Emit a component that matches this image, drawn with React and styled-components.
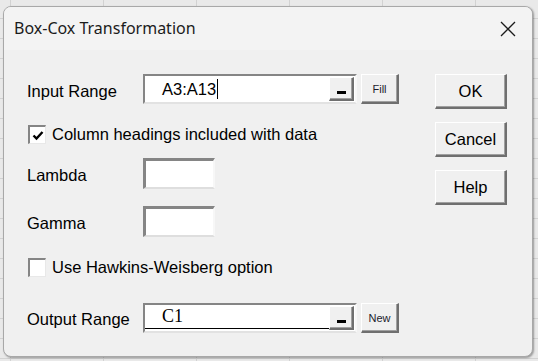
import React from "react"
import styled, { createGlobalStyle } from "styled-components"

const GlobalStyle = createGlobalStyle`
    html, body {
        margin: 0;
        padding: 0;
    }
    body {
        width: 538px;
        height: 361px;
        overflow: hidden;
        background-color: #e9e9e9;
        background-image:
            linear-gradient(to right, #d2d2d2 1px, transparent 1px),
            linear-gradient(to bottom, #d2d2d2 1px, transparent 1px);
        background-size: 93px 100%, 100% 20px;
        background-position: 10px 0, 0 -2px;
        font-family: "Liberation Sans", Arial, sans-serif;
    }
`

const Page = styled.div`
    box-sizing: border-box;
    width: 538px;
    height: 361px;
    padding: 6px 5px 4px 3px;
    display: flex;
`

const Dialog = styled.div`
    box-sizing: border-box;
    width: 530px;
    height: 351px;
    border: 1px solid #a8a8a8;
    border-radius: 8px;
    overflow: hidden;
    background: #f0f0f0;
    box-shadow: 1px 1px 2px rgba(0, 0, 0, 0.35);
    display: flex;
    flex-direction: column;
`

const TitleBar = styled.div`
    height: 43px;
    flex: none;
    background: #f3f3f3;
    display: flex;
    align-items: center;
    justify-content: space-between;
    padding: 0 16px 0 10px;

    span {
        font-family: "Noto Sans", "Open Sans", sans-serif;
        font-size: 16px;
        color: #1b1b1b;
        margin-top: -2px;
    }
`

const Body = styled.div`
    display: flex;
    padding: 24px 0 0 23px;
`

const Form = styled.div`
    display: flex;
    flex-direction: column;
    width: 372px;
`

const Row = styled.div`
    display: flex;
    align-items: center;
    height: ${p => p.h}px;
    margin-top: ${p => p.mt || 0}px;
`

const Label = styled.div`
    width: 116px;
    flex: none;
    font-size: 16.5px;
    color: #000;
    padding-top: ${p => (p.low ? 2 : 4)}px;
`

const Field = styled.div`
    box-sizing: border-box;
    width: 214px;
    height: 30px;
    border-style: solid;
    border-width: 2px;
    border-color: #858585 #f7f7f7 #e2e2e2 #858585;
    background: #fff;
    display: flex;
    align-items: center;
    padding-right: 1px;
`

const FieldText = styled.div`
    flex: 1;
    align-self: stretch;
    display: flex;
    align-items: center;
    padding-left: 17px;
    font-family: ${p => (p.serif ? '"Liberation Serif", "Times New Roman", serif' : '"Liberation Sans", Arial, sans-serif')};
    font-size: ${p => (p.serif ? 18 : 16.5)}px;
    color: #000;
    border-bottom: ${p => (p.underline ? "1px solid #000" : "none")};
    margin-bottom: ${p => (p.underline ? 2 : 0)}px;
`

const Caret = styled.span`
    display: inline-block;
    width: 1px;
    height: 20px;
    background: #000;
    margin-left: 1px;
`

const Raised = styled.button`
    box-sizing: border-box;
    padding: 0;
    background: #f0f0f0;
    border-style: solid;
    border-width: 1px 2px 2px 1px;
    border-color: #ffffff #6f6f6f #6f6f6f #ffffff;
    box-shadow: inset -1px -1px 0 #a0a0a0;
    font-family: "Liberation Sans", Arial, sans-serif;
    color: #000;
    cursor: default;
`

const PickButton = styled(Raised)`
    width: 25px;
    height: 24px;
    display: flex;
    align-items: flex-end;
    justify-content: center;
    padding-bottom: 5px;

    &::after {
        content: "";
        width: 9px;
        height: 3px;
        background: #000;
    }
`

const SmallButton = styled(Raised)`
    width: 38px;
    height: 30px;
    margin-left: 4px;
    font-size: 11px;
    color: #1c1c2c;
`

const Box = styled.div`
    box-sizing: border-box;
    width: 72px;
    height: 31px;
    border-style: solid;
    border-width: 3px 2px 2px 3px;
    border-color: #858585 #f7f7f7 #dedede #858585;
    background: #fff;
`

const CheckRow = styled.label`
    display: flex;
    align-items: center;
    margin-left: 1px;
    font-size: 16.5px;
    color: #000;
    gap: 6px;
`

const CheckBox = styled.span`
    box-sizing: border-box;
    width: 18px;
    height: 19px;
    border-style: solid;
    border-width: 2px 1px 1px 2px;
    border-color: #858585 #e8e8e8 #e8e8e8 #858585;
    background: #fff;
    display: flex;
    align-items: center;
    justify-content: center;
`

const Side = styled.div`
    display: flex;
    flex-direction: column;
    gap: 13px;
    margin-left: 36px;
`

const DialogButton = styled(Raised)`
    width: 72px;
    height: 35px;
    font-size: 16.5px;
`

const CloseIcon = () => (
    <svg width="16" height="16" viewBox="0 0 16 16">
        <path d="M1 1 L15 15 M15 1 L1 15" stroke="#1a1a1a" strokeWidth="1.3" fill="none" />
    </svg>
)

const Tick = () => (
    <svg width="12" height="11" viewBox="0 0 12 11">
        <path d="M1.5 5.5 L4.5 8.5 L10.5 2" stroke="#000" strokeWidth="2.4" fill="none" />
    </svg>
)

const App = () => {
    return (
        <Page>
            <GlobalStyle />
            <Dialog>
                <TitleBar>
                    <span>Box-Cox Transformation</span>
                    <CloseIcon />
                </TitleBar>
                <Body>
                    <Form>
                        <Row h={30}>
                            <Label>Input Range</Label>
                            <Field>
                                <FieldText>A3:A13<Caret /></FieldText>
                                <PickButton />
                            </Field>
                            <SmallButton>Fill</SmallButton>
                        </Row>
                        <Row h={19} mt={21}>
                            <CheckRow>
                                <CheckBox><Tick /></CheckBox>
                                Column headings included with data
                            </CheckRow>
                        </Row>
                        <Row h={31} mt={14}>
                            <Label>Lambda</Label>
                            <Box />
                        </Row>
                        <Row h={31} mt={17}>
                            <Label>Gamma</Label>
                            <Box />
                        </Row>
                        <Row h={19} mt={21}>
                            <CheckRow>
                                <CheckBox />
                                Use Hawkins-Weisberg option
                            </CheckRow>
                        </Row>
                        <Row h={30} mt={26}>
                            <Label low>Output Range</Label>
                            <Field>
                                <FieldText serif underline>C1</FieldText>
                                <PickButton />
                            </Field>
                            <SmallButton>New</SmallButton>
                        </Row>
                    </Form>
                    <Side>
                        <DialogButton>OK</DialogButton>
                        <DialogButton>Cancel</DialogButton>
                        <DialogButton>Help</DialogButton>
                    </Side>
                </Body>
            </Dialog>
        </Page>
    )
}

export default App
